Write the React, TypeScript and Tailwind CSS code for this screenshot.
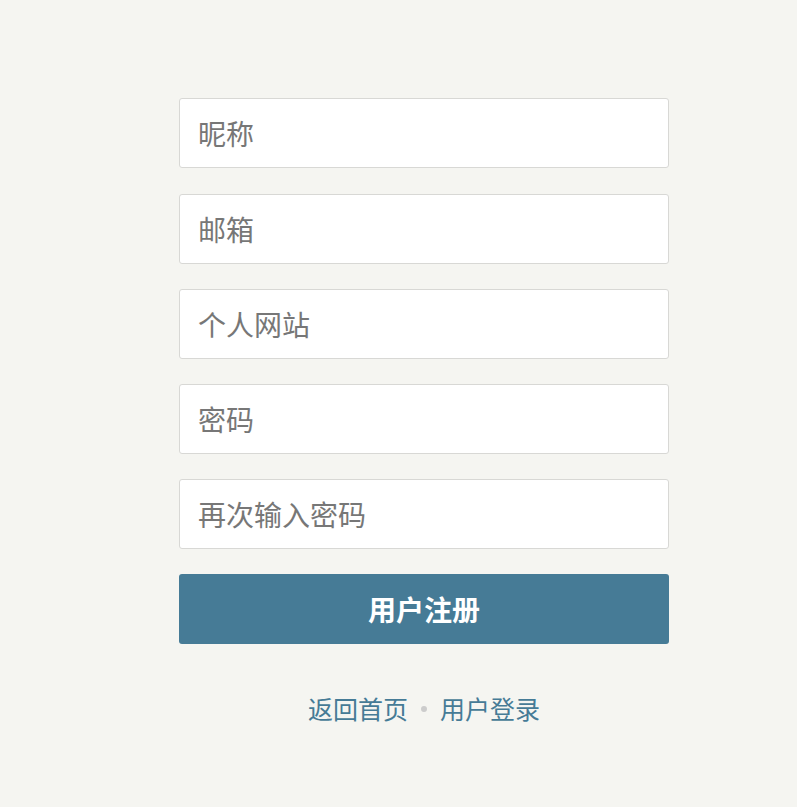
import React from 'react'

const fields = ['昵称', '邮箱', '个人网站', '密码', '再次输入密码']

export default function App() {
  return (
    <div
      className="min-h-[807px] w-full bg-[#f5f5f1] pt-[98px]"
      style={{ fontFamily: '"Noto Sans CJK SC", "Liberation Sans", sans-serif' }}
    >
      <div className="ml-[179px] w-[490px]">
        <form className="flex flex-col gap-[25px]" onSubmit={e => e.preventDefault()}>
          {fields.map((f, i) => (
            <input
              key={f}
              type={f.includes('密码') ? 'password' : 'text'}
              placeholder={f}
              className={`h-[70px] w-full rounded-[3px] border border-[#d8d8d5] bg-white px-[18px] text-[28px] text-[#333] outline-none placeholder:text-[#777] ${i === 1 ? 'mt-[1px]' : ''}`}
            />
          ))}
          <button
            type="submit"
            className="h-[70px] w-full rounded-[3px] bg-[#467b96] text-[28px] font-bold text-white"
          >
            用户注册
          </button>
        </form>
        <div className="mt-[46px] flex items-center justify-center gap-[13px] text-[25px] text-[#467b96]">
          <a href="#">返回首页</a>
          <span className="h-[6px] w-[6px] rounded-full bg-[#ccc]" />
          <a href="#">用户登录</a>
        </div>
      </div>
    </div>
  )
}
